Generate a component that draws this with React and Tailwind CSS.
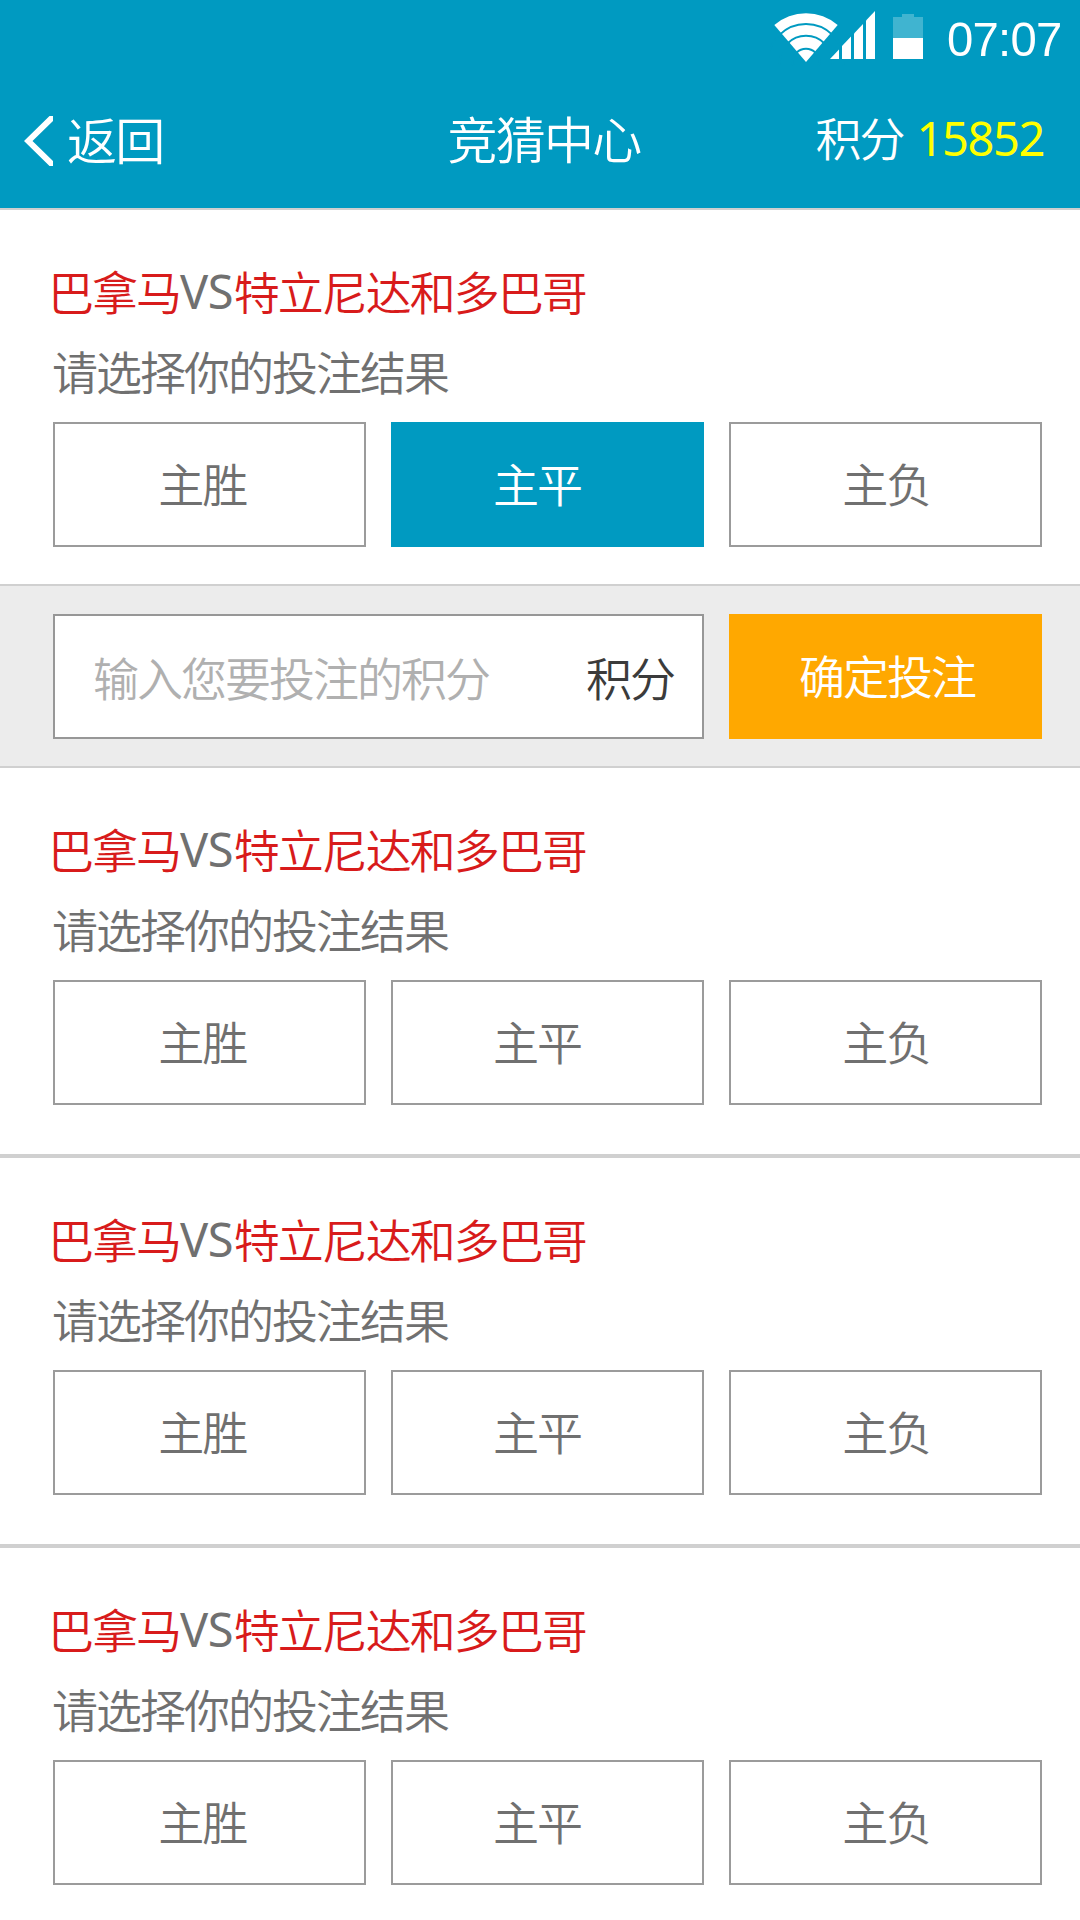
const cjk = "font-['Noto_Sans_CJK_SC','Noto_Sans',sans-serif]";
const latin = "font-['Noto_Sans','Open_Sans',sans-serif]";

function StatusIcons() {
  return (
    <svg width="160" height="66" viewBox="770 0 160 66" aria-hidden="true">
      <path d="M806 62 L774.3 25 A48.5 48.5 0 0 1 837.7 25 Z" fill="#fff" />
      <g fill="none" stroke="#009ac1" strokeWidth="2">
        <circle cx="806" cy="62" r="38" />
        <circle cx="806" cy="62" r="26.2" />
        <circle cx="806" cy="62" r="13.3" />
      </g>
      <g fill="#fff">
        <path d="M830 59 L839 49.5 V59 Z" />
        <path d="M842 59 V46 L851 36.5 V59 Z" />
        <path d="M854 59 V33.5 L863 24 V59 Z" />
        <path d="M866 59 V20.5 L875 11 V59 Z" />
        <path d="M893 38 H923 V59 H893 Z" />
      </g>
      <path d="M893 17 H902 V14 H914 V17 H923 V38 H893 Z" fill="#40b4d0" />
    </svg>
  );
}

function Header() {
  return (
    <header className="flex h-[210px] flex-col border-b-2 border-[#cfcfcf] bg-[#009ac1] text-white">
      <div className="flex h-[76px] items-start pl-[770px]">
        <StatusIcons />
        <span className="ml-[16.5px] mt-[9px] origin-left scale-x-[0.965] font-['Liberation_Sans',Arial,sans-serif] text-[49px] leading-[60px] tracking-[-0.8px]">
          07:07
        </span>
      </div>
      <div className="grid h-[130px] grid-cols-3 items-center">
        <button type="button" className="flex items-center pl-[24px]">
          <svg width="29" height="50" viewBox="0 0 29 50" fill="#fff" aria-hidden="true">
            <path d="M0 25 L25.5 0 H29 V5 L8.5 25 L29 45 V50 H25.5 Z" />
          </svg>
          <span className="ml-[14px] mt-[-7px] text-[50px] leading-[60px] tracking-[-1.7px]">返回</span>
        </button>
        <h1 className="mt-[-8px] pl-[8px] text-center text-[50px] leading-[60px] tracking-[-1.8px]">竞猜中心</h1>
        <div className="mt-[-8px] flex justify-end pr-[36px] text-[46px] leading-[60px]">
          <span className="tracking-[-2px]">积分</span>
          <span className={`${latin} ml-[13px] mt-[2px] text-[47px] font-normal tracking-[-1.4px] text-[#ffff00]`}>
            15852
          </span>
        </div>
      </div>
    </header>
  );
}

const options = [
  { label: "主胜", pad: "pr-[15px]" },
  { label: "主平", pad: "pr-[21px]" },
  { label: "主负", pad: "pl-[2px]" },
];

function Match({ selected, className }) {
  return (
    <section className={className}>
      <h2 className="flex h-[60px] text-[46px] leading-[60px] tracking-[-2px] text-[#d81b1b]">
        <span className="ml-[-5px]">巴拿马</span>
        <span className={`${latin} mr-[0.5px] mt-px text-[47px] font-normal tracking-[-0.4px] text-[#707070]`}>VS</span>
        <span>特立尼达和多巴哥</span>
      </h2>
      <p className="ml-[-1px] mt-[20px] h-[60px] text-[46px] leading-[60px] tracking-[-2px] text-[#707070]">
        请选择你的投注结果
      </p>
      <div className="mt-[22px] grid grid-cols-3 gap-[24.5px]">
        {options.map((o) => (
          <button
            key={o.label}
            type="button"
            className={`${o.pad} h-[125px] border-2 pb-[6px] text-[46px] leading-[60px] tracking-[-2px] ${
              selected === o.label
                ? "border-[#009ac1] bg-[#009ac1] text-white"
                : "border-[#9b9b9b] text-[#707070]"
            }`}
          >
            {o.label}
          </button>
        ))}
      </div>
    </section>
  );
}

function BetBar() {
  return (
    <form className="grid h-[184px] grid-cols-[651px_313px] gap-[25px] border-y-2 border-[#d0d0d0] bg-[#ececec] pl-[53px] pt-[28px]">
      <label className="flex h-[125px] items-center justify-between border-2 border-[#979797] bg-white pb-[2px] pl-[38px] pr-[28px] text-[46px] leading-[60px] tracking-[-2px]">
        <span className="text-[#b0b0b0]">输入您要投注的积分</span>
        <span className="text-[#3b3b3b]">积分</span>
      </label>
      <button
        type="button"
        className="h-[125px] bg-[#ffa800] pb-[5px] pl-[3px] text-[46px] leading-[60px] tracking-[-2px] text-white"
      >
        确定投注
      </button>
    </form>
  );
}

export default function App() {
  return (
    <main className={`${cjk} h-[1920px] w-[1080px] overflow-hidden bg-white font-[350]`}>
      <Header />
      <Match selected="主平" className="h-[374px] pl-[53px] pr-[38px] pt-[50px]" />
      <BetBar />
      <Match className="h-[390px] border-b-4 border-[#d0d0d0] pl-[53px] pr-[38px] pt-[50px]" />
      <Match className="h-[390px] border-b-4 border-[#d0d0d0] pl-[53px] pr-[38px] pt-[50px]" />
      <Match className="pl-[53px] pr-[38px] pt-[50px]" />
    </main>
  );
}
